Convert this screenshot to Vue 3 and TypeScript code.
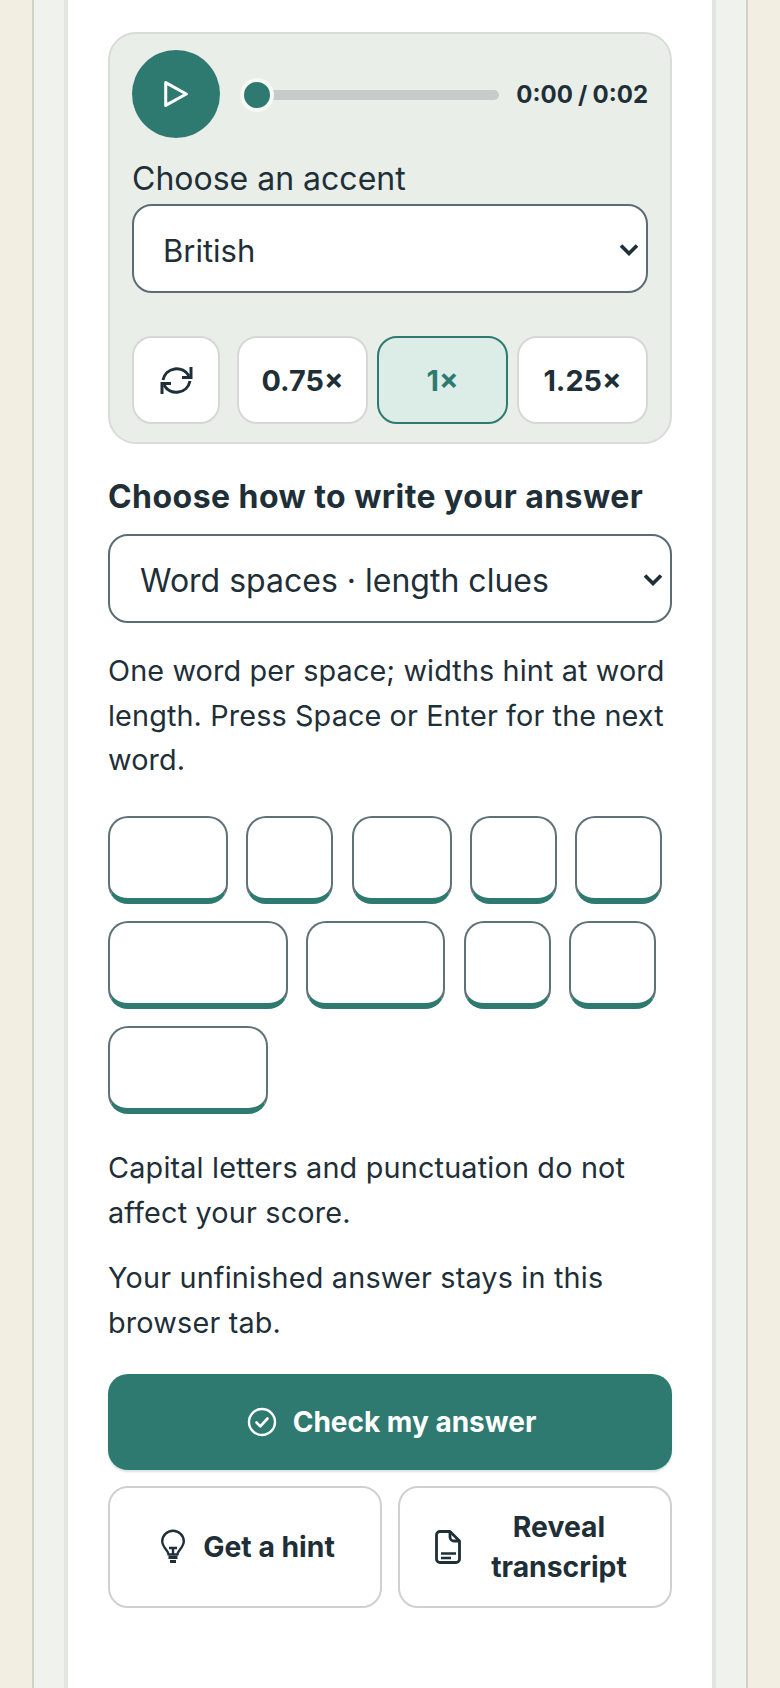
<script setup lang="ts">
const speeds = [
  { label: '0.75×', active: false },
  { label: '1×', active: true },
  { label: '1.25×', active: false },
]
const rows: number[][] = [
  [120, 87, 100, 87, 87],
  [180, 139, 87, 87],
  [160],
]
</script>

<template>
  <div class="page">
    <div class="shell">
      <main class="card">
        <section class="player">
          <div class="transport">
            <button class="play" aria-label="Play">
              <svg width="24" height="26" viewBox="0 0 22 24" fill="none" stroke="#fff" stroke-width="2.800" stroke-linejoin="round"><path d="M1.500 1.500v21L20.500 12z" /></svg>
            </button>
            <div class="track"><span class="thumb"></span></div>
            <span class="time">0:00 / 0:02</span>
          </div>
          <label class="accent-label">Choose an accent</label>
          <div class="select-wrap">
            <select class="select british"><option>British</option></select>
            <svg class="chev" width="20" height="13" viewBox="0 0 20 13" fill="none" stroke="#1f2f38" stroke-width="3.600"><path d="M2 2.500l8 8 8-8" /></svg>
          </div>
          <div class="controls">
            <button class="loop" aria-label="Repeat">
              <svg width="33" height="31" viewBox="0 0 33 31" fill="none" stroke="#1f2f38" stroke-width="3"><path d="M31 2v10.500h-9" /><path d="M3 15A14 14 0 0 1 29 11" /><path d="M2 29V18.500h9" /><path d="M30 16A14 14 0 0 1 4 20" /></svg>
            </button>
            <div class="speeds">
              <button v-for="s in speeds" :key="s.label" class="speed" :class="{ active: s.active }">{{ s.label }}</button>
            </div>
          </div>
        </section>

        <h2 class="heading">Choose how to write your answer</h2>
        <div class="select-wrap">
          <select class="select"><option>Word spaces · length clues</option></select>
          <svg class="chev" width="20" height="13" viewBox="0 0 20 13" fill="none" stroke="#1f2f38" stroke-width="3.600"><path d="M2 2.500l8 8 8-8" /></svg>
        </div>
        <p class="help">One word per space; widths hint at word length. Press Space or Enter for the next word.</p>

        <div class="blanks">
          <div v-for="(row, i) in rows" :key="i" class="blank-row">
            <input v-for="(w, j) in row" :key="j" class="blank" type="text" :style="{ width: w + 'px' }" />
          </div>
        </div>

        <p class="note">Capital letters and punctuation do not affect your score.</p>
        <p class="note second">Your unfinished answer stays in this browser tab.</p>

        <button class="check">
          <svg class="icon" viewBox="0 0 36 36" fill="none" stroke="#fff"><circle cx="18" cy="18" r="13" stroke-width="2.400" /><path d="M12.500 18.500l3.800 3.800 7.200-7.800" stroke-width="2.600" stroke-linecap="round" stroke-linejoin="round" /></svg>
          <span>Check my answer</span>
        </button>
        <div class="secondary">
          <button class="ghost">
            <svg class="icon" viewBox="0 0 36 36" fill="none" stroke="#1f2f38" stroke-width="2.400" stroke-linejoin="round"><g transform="translate(6 0.500)"><path d="M7.500 25c0-3-2.500-4.500-4.300-7.500C1.700 15 1.200 13.500 1.200 12a10.800 10.800 0 0 1 21.600 0c0 1.500-.5 3-2 5.500-1.800 3-4.300 4.500-4.300 7.500z" /><path d="M8 18.500h8M12 18.500V25" /><path d="M7.500 28h9M9 32h6" stroke-width="2.800" /></g></svg>
            <span>Get a hint</span>
          </button>
          <button class="ghost">
            <svg class="icon" viewBox="0 0 36 36" fill="none" stroke="#1f2f38" stroke-width="2.800" stroke-linejoin="round"><g transform="translate(5 1)"><path d="M15 1.500H5A3.500 3.500 0 0 0 1.500 5v24A3.500 3.500 0 0 0 5 32.500h16a3.500 3.500 0 0 0 3.500-3.500V11z" /><path d="M15 1.500V7a4 4 0 0 0 4 4h5.500" /><path d="M6 23.500h15M6 28h10" stroke-width="2.400" /></g></svg>
            <span class="reveal">Reveal transcript</span>
          </button>
        </div>
      </main>
    </div>
  </div>
</template>

<style>
html, body { margin: 0; background: #f2efe2; }
</style>

<style scoped>
.page {
  height: 1688px;
  overflow: hidden;
  padding: 0 32px;
  background: #f2efe2;
  font-family: Inter, "Liberation Sans", sans-serif;
  color: #1f2f38;
}
.shell {
  height: 100%;
  padding: 0 34px;
  border-left: 2px solid #cfd3c9;
  border-right: 2px solid #cfd3c9;
  background: #eff2ed;
}
.card {
  height: 100%;
  box-sizing: border-box;
  padding: 32px 40px 0;
  background: #fff;
  box-shadow: 0 0 0 4px #e2e5e1;
}
button, select, input { font-family: inherit; color: inherit; }
.player {
  box-sizing: border-box;
  height: 412px;
  padding: 16px 22px 0;
  border: 2px solid #d9dcd8;
  border-radius: 28px;
  background: #e9eee9;
}
.transport { display: flex; align-items: center; }
.play {
  display: flex;
  flex: none;
  align-items: center;
  justify-content: center;
  width: 88px;
  height: 88px;
  padding: 0;
  border: 0;
  border-radius: 50%;
  background: #2f7a70;
}
.track {
  position: relative;
  flex: 1;
  height: 10px;
  margin: 2px 17px 0 20px;
  border-radius: 5px;
  background: #c6cdc9;
}
.thumb {
  position: absolute;
  top: 50%;
  left: 0;
  box-sizing: border-box;
  width: 34px;
  height: 34px;
  border: 4px solid #f6f8f4;
  border-radius: 50%;
  background: #2f7a70;
  transform: translateY(-50%);
}
.time {
  font-size: 24px;
  font-weight: 700;
  word-spacing: -0.500px;
  white-space: nowrap;
}
.accent-label {
  display: block;
  margin-top: 19px;
  margin-bottom: 3px;
  font-size: 32px;
  line-height: 44px;
}
.select-wrap { position: relative; }
.select {
  display: block;
  box-sizing: border-box;
  width: 100%;
  height: 89px;
  padding: 4px 30px 0;
  border: 2px solid #5a6c74;
  border-radius: 20px;
  background: #fff;
  font-size: 32px;
  appearance: none;
}
.select.british { padding-left: 29px; font-size: 31px; }
.chev {
  position: absolute;
  top: 39px;
  right: 9px;
  pointer-events: none;
}
.controls {
  display: flex;
  gap: 17px;
  margin-top: 43px;
}
.loop, .speed {
  display: flex;
  align-items: center;
  justify-content: center;
  box-sizing: border-box;
  height: 88px;
  padding: 0;
  border: 2px solid #d5d8d5;
  border-radius: 20px;
  background: #fff;
}
.loop { flex: none; width: 88px; }
.speeds {
  display: grid;
  flex: 1;
  grid-template-columns: repeat(3, 1fr);
  gap: 9px;
}
.speed { font-size: 28.8px; font-weight: 700; }
.speed.active {
  border-color: #2f7a70;
  background: #dcede7;
  color: #2f7a70;
}
.heading {
  margin: 29px 0 13px;
  font-size: 32px;
  font-weight: 700;
  line-height: 48px;
  letter-spacing: 0.45px;
}
.help, .note {
  margin: 0;
  font-size: 28.8px;
  line-height: 44.64px;
  letter-spacing: 0.18px;
}
.help { margin-top: 26px; letter-spacing: 0.12px; }
.blanks {
  display: flex;
  flex-direction: column;
  gap: 17px;
  margin-top: 33px;
}
.blank-row { display: flex; gap: 18.25px; }
.blank {
  box-sizing: border-box;
  height: 88px;
  padding: 0;
  border: 2px solid #5f727a;
  border-bottom: 6px solid #2f7a70;
  border-radius: 20px;
  background: #fff;
}
.note { margin-top: 32px; }
.note.second { margin-top: 21px; }
.icon { flex: none; width: 36px; height: 36px; }
.check {
  display: flex;
  align-items: center;
  justify-content: center;
  gap: 13px;
  box-sizing: border-box;
  width: 100%;
  height: 96px;
  margin-top: 29px;
  border: 0;
  border-radius: 20px;
  background: #2f7a70;
  box-shadow: 0 2px 2px rgba(47, 122, 112, 0.2);
  color: #fff;
  font-size: 28px;
  font-weight: 700;
}
.secondary {
  display: grid;
  grid-template-columns: 1fr 1fr;
  gap: 16px;
  margin-top: 16px;
}
.ghost {
  display: flex;
  align-items: center;
  justify-content: center;
  gap: 12px;
  box-sizing: border-box;
  height: 122px;
  padding: 0 30px;
  border: 2px solid #cfd1cf;
  border-radius: 20px;
  background: #fff;
  font-size: 28.3px;
  font-weight: 700;
  line-height: 40px;
}
.reveal { flex: 1; }
</style>
